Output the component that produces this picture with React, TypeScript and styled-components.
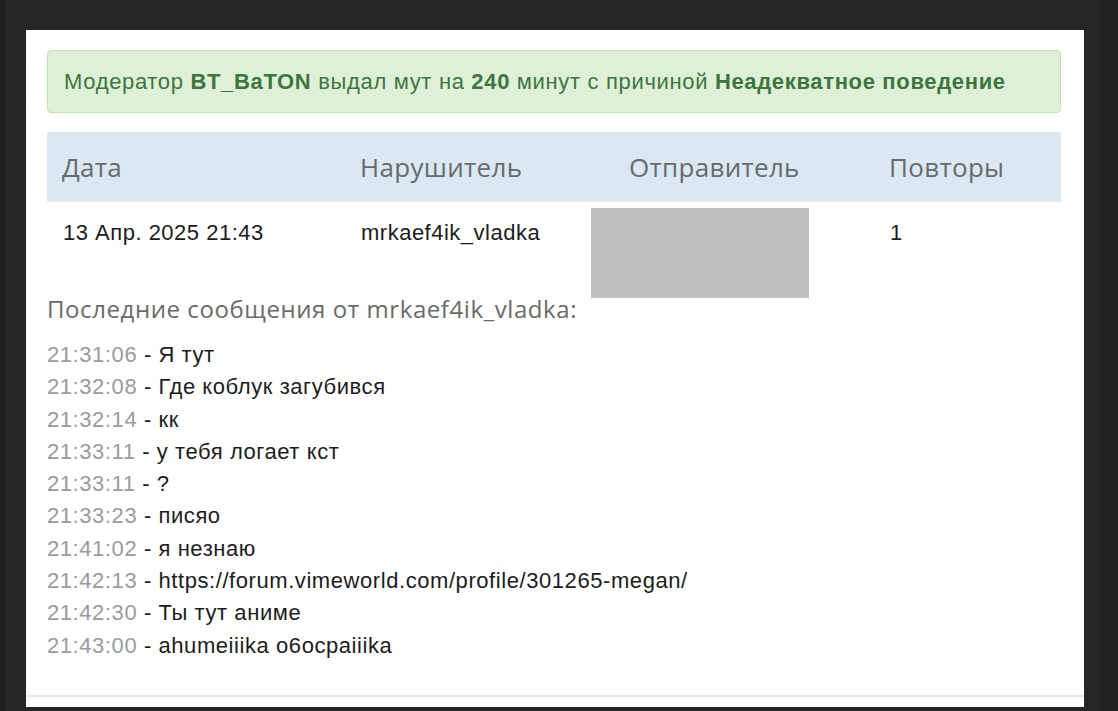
import styled, { createGlobalStyle } from "styled-components";

const GlobalStyle = createGlobalStyle`
  html, body {
    margin: 0;
    padding: 0;
    background: #262626;
  }
  * {
    box-sizing: border-box;
  }
`;

const Page = styled.div`
  display: flex;
  width: 1118px;
  height: 711px;
  overflow: hidden;
  background: #262626;
`;

const Rail = styled.div<{ $w: number; $bg: string }>`
  width: ${(p) => p.$w}px;
  flex-shrink: 0;
  background: ${(p) => p.$bg};
`;

const Main = styled.div`
  flex: 1;
  padding: 30px 16px 4px 21px;
  display: flex;
`;

const Card = styled.div`
  flex: 1;
  background: #fff;
  padding: 20px 23px 0 21px;
  display: flex;
  flex-direction: column;
  font-family: "Liberation Sans", Arial, sans-serif;
`;

const Alert = styled.div`
  height: 63px;
  display: flex;
  align-items: center;
  padding: 0 16px;
  background: #dff0d8;
  border: 1px solid #c3e1b6;
  border-radius: 4px;
  color: #3c763d;
  font-size: 22px;
  letter-spacing: 0.66px;
  white-space: nowrap;

  b {
    font-weight: bold;
  }
`;

const Table = styled.div`
  margin-top: 19px;
  position: relative;
`;

const Row = styled.div<{ $head?: boolean }>`
  display: grid;
  grid-template-columns: 298px 269px 260px 1fr;
  height: ${(p) => (p.$head ? "70px" : "62px")};
  background: ${(p) => (p.$head ? "#d9e8f3" : "transparent")};
  border-top: ${(p) => (p.$head ? "1px solid #e4ebf0" : "none")};
  border-bottom: ${(p) => (p.$head ? "2px solid #e3e9ee" : "none")};
`;

const HeadCell = styled.div`
  padding-left: 15px;
  display: flex;
  align-items: center;
  font-family: "Open Sans", "Noto Sans", sans-serif;
  font-size: 26px;
  letter-spacing: 0.3px;
  color: #6a6a6a;
`;

const Cell = styled.div`
  padding: 17px 0 0 16px;
  font-size: 22px;
  letter-spacing: 0.5px;
  line-height: 28px;
  color: #1c1c1c;
`;

const Redacted = styled.div`
  position: absolute;
  left: 544px;
  top: 76px;
  width: 218px;
  height: 90px;
  background: #c1c1c1;
`;

const SubHead = styled.div`
  margin-top: 30px;
  line-height: 30px;
  font-family: "Open Sans", "Noto Sans", sans-serif;
  font-size: 24px;
  letter-spacing: 0.58px;
  color: #6a6a6a;
`;

const Messages = styled.div`
  margin-top: 15px;
  display: flex;
  flex-direction: column;
  font-size: 22px;
  letter-spacing: 0.57px;
  line-height: 32.3px;
  color: #1c1c1c;
`;

const Time = styled.span`
  color: #9b9b9b;
`;

const Footer = styled.div`
  margin-top: auto;
  margin-left: -21px;
  margin-right: -23px;
  height: 12px;
  border-top: 2px solid #e8e8e8;
`;

const messages: [string, string][] = [
  ["21:31:06", "Я тут"],
  ["21:32:08", "Где коблук загубився"],
  ["21:32:14", "кк"],
  ["21:33:11", "у тебя логает кст"],
  ["21:33:11", "?"],
  ["21:33:23", "писяо"],
  ["21:41:02", "я незнаю"],
  ["21:42:13", "https://forum.vimeworld.com/profile/301265-megan/"],
  ["21:42:30", "Ты тут аниме"],
  ["21:43:00", "ahumeiiika o6ocpaiiika"],
];

const App = () => {
  return (
    <>
      <GlobalStyle />
      <Page>
        <Rail $w={5} $bg="#1f1f1f" />
        <Main>
          <Card>
            <Alert>
              Модератор&nbsp;<b>BT_BaTON</b>&nbsp;выдал мут на&nbsp;<b>240</b>
              &nbsp;минут с причиной&nbsp;<b>Неадекватное поведение</b>
            </Alert>
            <Table>
              <Row $head>
                <HeadCell>Дата</HeadCell>
                <HeadCell>Нарушитель</HeadCell>
                <HeadCell>Отправитель</HeadCell>
                <HeadCell>Повторы</HeadCell>
              </Row>
              <Row>
                <Cell>13 Апр. 2025 21:43</Cell>
                <Cell>mrkaef4ik_vladka</Cell>
                <Cell></Cell>
                <Cell>1</Cell>
              </Row>
              <Redacted />
            </Table>
            <SubHead>Последние сообщения от mrkaef4ik_vladka:</SubHead>
            <Messages>
              {messages.map(([time, text], i) => (
                <div key={i}>
                  <Time>{time}</Time> - {text}
                </div>
              ))}
            </Messages>
            <Footer />
          </Card>
        </Main>
        <Rail $w={18} $bg="#222222" />
      </Page>
    </>
  );
};

export default App;
